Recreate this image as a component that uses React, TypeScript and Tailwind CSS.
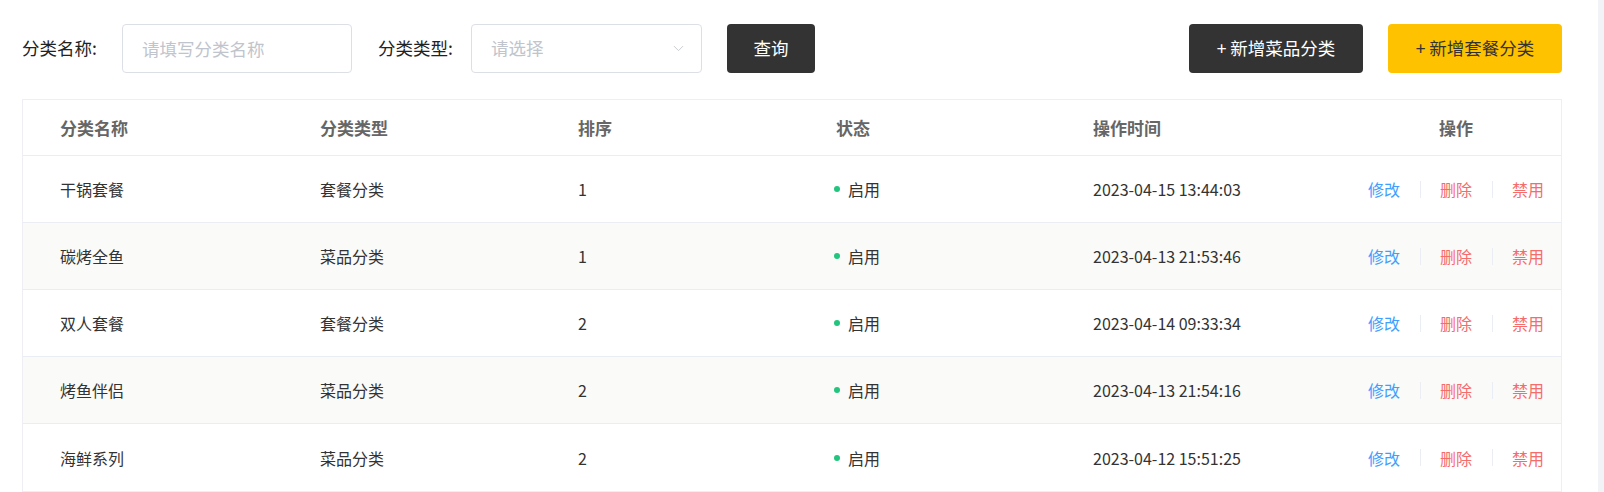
import { ChevronDown } from 'lucide-react';

type Row = {
  name: string;
  type: string;
  sort: number;
  time: string;
};

const rows: Row[] = [
  { name: '干锅套餐', type: '套餐分类', sort: 1, time: '2023-04-15 13:44:03' },
  { name: '碳烤全鱼', type: '菜品分类', sort: 1, time: '2023-04-13 21:53:46' },
  { name: '双人套餐', type: '套餐分类', sort: 2, time: '2023-04-14 09:33:34' },
  { name: '烤鱼伴侣', type: '菜品分类', sort: 2, time: '2023-04-13 21:54:16' },
  { name: '海鲜系列', type: '菜品分类', sort: 2, time: '2023-04-12 15:51:25' },
];

const cols = 'grid grid-cols-[260px_258px_258px_257px_1fr_265px]';

export default function App() {
  return (
    <div className="flex h-[492px] w-full overflow-hidden bg-white font-['Noto_Sans_CJK_SC',sans-serif]">
      <main className="flex-1 pl-[22px] pr-[36px] pt-[24px]">
        {/* search bar */}
        <div className="flex h-[49px] items-center">
          <label className="w-[100px] text-[17.5px] text-[#222]">分类名称:</label>
          <input
            placeholder="请填写分类名称"
            className="h-[49px] w-[230px] rounded-[4px] border border-[#dcdfe6] px-[19px] text-[17.5px] text-[#333] outline-none placeholder:text-[#c0c4cc]"
          />
          <label className="ml-[26px] w-[93px] text-[17.5px] text-[#222]">分类类型:</label>
          <div className="flex h-[49px] w-[231px] items-center justify-between rounded-[4px] border border-[#dcdfe6] pl-[19px] pr-[14px]">
            <span className="text-[17.5px] text-[#c0c4cc]">请选择</span>
            <ChevronDown size={17} strokeWidth={1.2} className="text-[#c0c4cc]" />
          </div>
          <button className="ml-[25px] h-[49px] w-[88px] rounded-[4px] bg-[#333333] text-[17.5px] text-white">
            查询
          </button>
          <div className="flex-1" />
          <button className="h-[49px] w-[174px] rounded-[4px] bg-[#333333] text-[17.5px] text-white">
            + 新增菜品分类
          </button>
          <button className="ml-[25px] h-[49px] w-[174px] rounded-[4px] bg-[#ffc200] text-[17.5px] text-[#333]">
            + 新增套餐分类
          </button>
        </div>

        {/* table */}
        <div className="mt-[26px] border border-[#eeeff4]">
          <div className={`${cols} h-[56px] items-center border-b border-[#ebedf4] text-[17px] font-bold text-[#666]`}>
            <div className="pl-[37px]">分类名称</div>
            <div className="pl-[37px]">分类类型</div>
            <div className="pl-[37px]">排序</div>
            <div className="pl-[37px]">状态</div>
            <div className="pl-[37px]">操作时间</div>
            <div className="flex justify-end pr-[17px]">
              <div className="w-[176px] text-center">操作</div>
            </div>
          </div>
          {rows.map((r, i) => (
            <div
              key={r.name}
              className={`${cols} h-[67px] items-center border-b border-[#ebedf4] text-[16px] text-[#333] last:border-b-0 ${
                i % 2 === 1 ? 'bg-[#fafaf8]' : 'bg-white'
              }`}
            >
              <div className="pl-[37px]">{r.name}</div>
              <div className="pl-[37px]">{r.type}</div>
              <div className="pl-[37px]">{r.sort}</div>
              <div className="flex items-center pl-[35px]">
                <span className="mr-[8px] h-[6px] w-[6px] rounded-full bg-[#22c57d]" />
                启用
              </div>
              <div className="pl-[37px]">{r.time}</div>
              <div className="flex items-center justify-end pr-[17px]">
                <span className="text-[#419eff]">修改</span>
                <span className="ml-[20px] mr-[19px] h-[17px] w-px bg-[#ebedf4]" />
                <span className="text-[#f56c6c]">删除</span>
                <span className="ml-[20px] mr-[19px] h-[17px] w-px bg-[#ebedf4]" />
                <span className="text-[#f56c6c]">禁用</span>
              </div>
            </div>
          ))}
        </div>
      </main>
      <div className="w-[6px] bg-[#f2f3f7]" />
    </div>
  );
}
